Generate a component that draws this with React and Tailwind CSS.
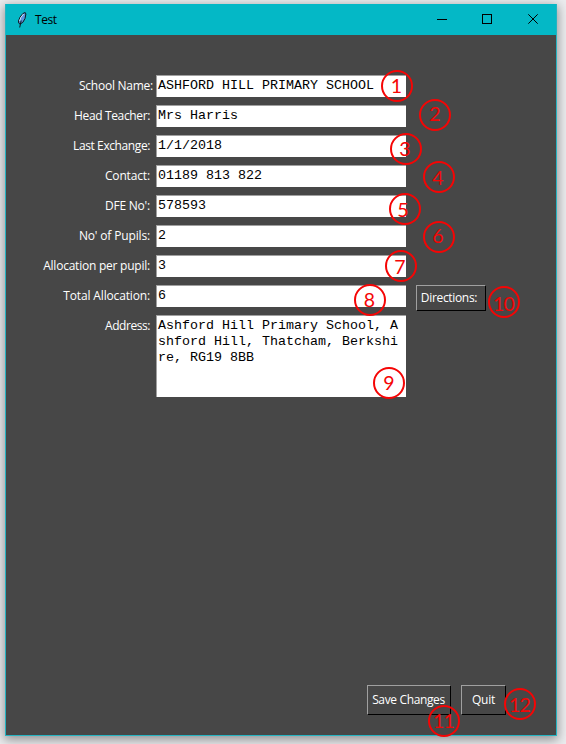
const fields = [
  { label: "School Name:", value: "ASHFORD HILL PRIMARY SCHOOL", pad: "pr-[3px]", track: "tracking-[-0.25px]" },
  { label: "Head Teacher:", value: "Mrs Harris", pad: "pr-[6px]", track: "tracking-[-0.36px]" },
  { label: "Last Exchange:", value: "1/1/2018", pad: "pr-[6px]", track: "tracking-[-0.4px]" },
  { label: "Contact:", value: "01189 813 822", pad: "pr-[6px]", track: "tracking-[-0.15px]" },
  { label: "DFE No':", value: "578593", pad: "pr-[6px]", track: "tracking-[-0.2px]" },
  { label: "No' of Pupils:", value: "2", pad: "pr-[6px]", track: "tracking-[-0.15px]" },
  { label: "Allocation per pupil:", value: "3", pad: "pr-[6px]", track: "tracking-[-0.23px]" },
  { label: "Total Allocation:", value: "6", pad: "pr-[6px]", track: "tracking-[-0.15px]", button: true },
];

// Centre of each ring, and the offset of its number from that centre.
const markers = [
  [397, 86, -0.5, 0],
  [435, 115, 0, -1],
  [406, 149, -1, 0],
  [439, 177, -1, 1],
  [405, 209, -2, 1],
  [439, 237, -1, -1],
  [401, 266, -1, 1],
  [370, 300, -0.5, 0],
  [389, 383, 0, 0],
  [504, 302, 0, 2],
  [444, 721, 0, 0],
  [520, 704, 0, 1],
];

function Label({ pad, track, children }) {
  return (
    <div className={`w-[150px] shrink-0 text-right text-[12px] leading-[22px] whitespace-nowrap text-white ${pad} ${track}`}>
      {children}
    </div>
  );
}

function Button({ className, children }) {
  return (
    <button
      className={`flex shrink-0 items-center justify-center border border-t-[#a0a0a0] border-r-black border-b-black border-l-[#a0a0a0] text-[12px] whitespace-nowrap text-white ${className}`}
    >
      {children}
    </button>
  );
}

function Feather() {
  return (
    <svg className="ml-[11px] h-[16px] w-[10px] shrink-0" viewBox="0 0 10 16">
      <path d="M8.2.5 5.8 1.6 3 5.2 1.5 9l.3 2.2 1.2.9 2.8-1.7L8 6.5 8.9 2z" fill="#5c94de" stroke="#10151c" strokeWidth="1" />
      <path d="M6.6 2 3.8 5.5 2.6 9" fill="none" stroke="#cfe2f8" strokeWidth="1" />
      <path d="M4.2 8.5 2.7 15.5" fill="none" stroke="#10151c" strokeWidth="1" />
    </svg>
  );
}

export default function App() {
  return (
    <div className="relative h-[744px] w-[566px] overflow-hidden bg-[#ebecee] pt-[4px] pl-[5px] font-['Open_Sans',sans-serif]">
      <div className="flex h-[732px] w-[552px] flex-col border border-t-0 border-[#25b4c2] bg-[#474747] shadow-[0_3px_10px_1px_rgba(0,0,0,0.38)]">
        <header className="flex h-[31px] shrink-0 items-center bg-[#04b8c6]">
          <Feather />
          <div className="ml-[8px] text-[12px] tracking-[-0.4px] text-black">Test</div>
          <svg className="ml-auto h-[31px] w-[138px]" viewBox="0 0 138 31" fill="none" stroke="black">
            <path d="M19 15.5h10M64.5 10.5h9v9h-9z" shapeRendering="crispEdges" />
            <path d="m110.3 10.3 9.4 9.4m0-9.4-9.4 9.4" />
          </svg>
        </header>
        <main className="flex grow flex-col pt-[40px]">
          <div className="flex flex-col gap-[8px]">
            {fields.map((f) => (
              <div key={f.label} className="flex h-[22px]">
                <Label pad={f.pad} track={f.track}>{f.label}</Label>
                <div className="h-[22px] w-[250px] border-t border-l border-[#a0a0a0] bg-white pl-px font-['Liberation_Mono',monospace] text-[13.333px] leading-[19px] whitespace-pre text-black">
                  {f.value}
                </div>
                {f.button && <Button className="ml-[10px] h-[26px] w-[70px] pr-[4px] tracking-[-0.33px]">Directions:</Button>}
              </div>
            ))}
            <div className="flex h-[82px]">
              <Label pad="pr-[6px]" track="tracking-[-0.45px]">Address:</Label>
              <div className="w-[250px] border-t border-l border-[#a0a0a0] bg-white pt-[2px] pl-px font-['Liberation_Mono',monospace] text-[13.333px] leading-[16px] whitespace-pre text-black">
                {"Ashford Hill Primary School, A\nshford Hill, Thatcham, Berkshi\nre, RG19 8BB"}
              </div>
            </div>
          </div>
          <footer className="mt-auto mb-[20px] flex gap-[10px] pl-[361px]">
            <Button className="h-[30px] w-[84px] pr-px tracking-[-0.36px]">Save Changes</Button>
            <Button className="h-[30px] w-[45px] tracking-[-0.2px]">Quit</Button>
          </footer>
        </main>
      </div>
      <svg className="pointer-events-none absolute inset-0 h-[744px] w-[566px]" viewBox="0 0 566 744">
        {markers.map(([x, y, dx, dy], i) => (
          <g key={i}>
            <circle cx={x} cy={y} r="15" fill="none" stroke="#f50505" strokeWidth="2" />
            <text x={x + dx - 0.5} y={y + dy + 7} textAnchor="middle" className="fill-[#f50505] font-['Lato',sans-serif] text-[19.5px] tracking-[-0.8px]">
              {i + 1}
            </text>
          </g>
        ))}
      </svg>
    </div>
  );
}
